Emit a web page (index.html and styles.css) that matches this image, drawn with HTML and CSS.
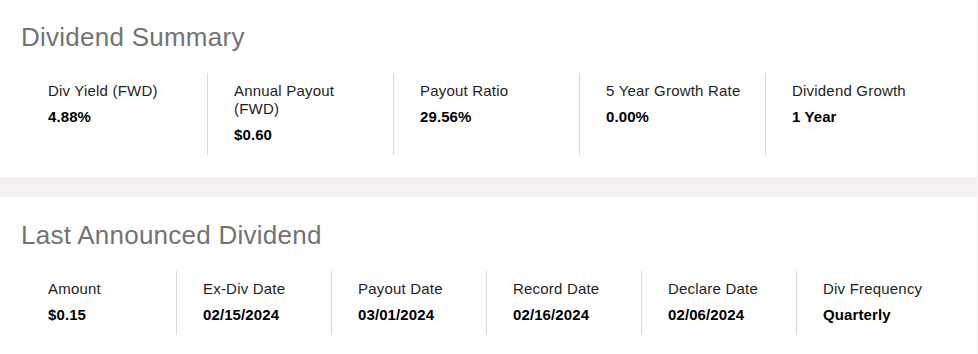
FILE: index.html
```html
<!DOCTYPE html>
<html lang="en">
<head>
<meta charset="utf-8">
<title>Dividend Summary</title>
<link rel="stylesheet" href="styles.css">
</head>
<body>
<section class="panel panel-summary">
  <h2 class="panel-title">Dividend Summary</h2>
  <div class="stats stats-5">
    <div class="stat"><div class="stat-label">Div Yield (FWD)</div><div class="stat-value">4.88%</div></div>
    <div class="stat"><div class="stat-label">Annual Payout (FWD)</div><div class="stat-value">$0.60</div></div>
    <div class="stat"><div class="stat-label">Payout Ratio</div><div class="stat-value">29.56%</div></div>
    <div class="stat"><div class="stat-label">5 Year Growth Rate</div><div class="stat-value">0.00%</div></div>
    <div class="stat"><div class="stat-label">Dividend Growth</div><div class="stat-value">1 Year</div></div>
  </div>
</section>
<section class="panel panel-last">
  <h2 class="panel-title">Last Announced Dividend</h2>
  <div class="stats stats-6">
    <div class="stat"><div class="stat-label">Amount</div><div class="stat-value">$0.15</div></div>
    <div class="stat"><div class="stat-label">Ex-Div Date</div><div class="stat-value">02/15/2024</div></div>
    <div class="stat"><div class="stat-label">Payout Date</div><div class="stat-value">03/01/2024</div></div>
    <div class="stat"><div class="stat-label">Record Date</div><div class="stat-value">02/16/2024</div></div>
    <div class="stat"><div class="stat-label">Declare Date</div><div class="stat-value">02/06/2024</div></div>
    <div class="stat"><div class="stat-label">Div Frequency</div><div class="stat-value">Quarterly</div></div>
  </div>
</section>
</body>
</html>
```
FILE: styles.css
```css
html, body {
  margin: 0;
  padding: 0;
}
body {
  background: #f4f1f0;
  font-family: "Liberation Sans", Arial, sans-serif;
  color: #222;
}
.panel {
  background: #ffffff;
  width: 977px;
  box-sizing: border-box;
  padding: 22px 0 22px 21px;
}
.panel-last {
  margin-top: 20px;
  padding-top: 23px;
}
.panel-title {
  margin: 0 0 21px 0;
  font-size: 26px;
  line-height: 30px;
  font-weight: normal;
  letter-spacing: 0.25px;
  color: #737373;
}
.stats {
  display: grid;
  width: 930px;
}
.stats-5 {
  grid-template-columns: repeat(5, 1fr);
}
.stats-6 {
  grid-template-columns: repeat(6, 1fr);
}
.stat {
  border-left: 1px solid #d9d9d9;
  padding: 9px 18px 11px 26px;
}
.stat:first-child {
  border-left-color: transparent;
}
.stat-label {
  font-size: 15px;
  line-height: 18px;
  letter-spacing: 0.2px;
  color: #1e1e1e;
}
.stat-value {
  margin-top: 8px;
  font-size: 15px;
  line-height: 18px;
  font-weight: bold;
  letter-spacing: 0.1px;
  color: #000;
}
```
